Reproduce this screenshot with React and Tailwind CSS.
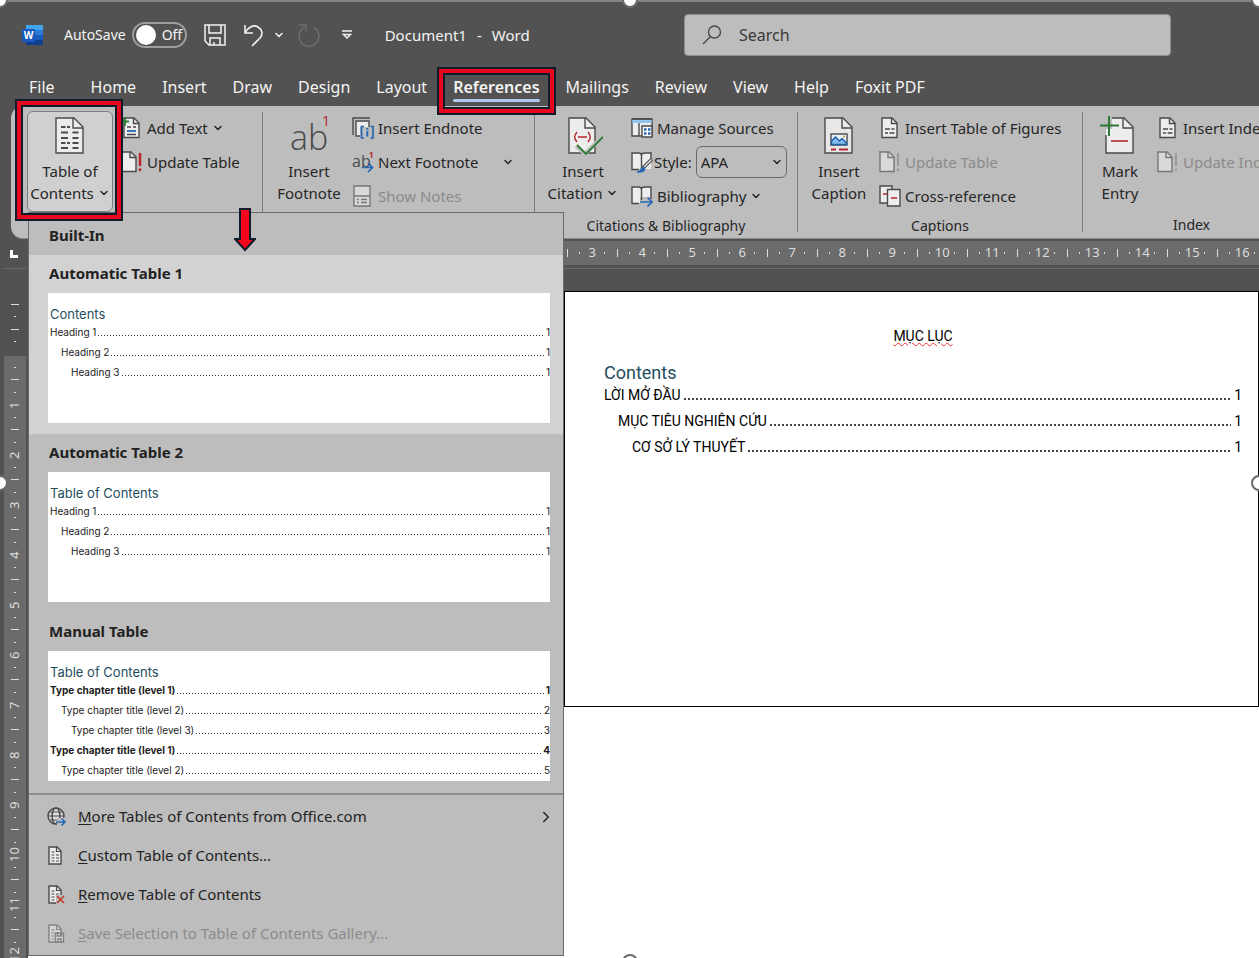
import { ChevronDown, ChevronRight } from 'lucide-react';
import clsx from 'clsx';

const TABS = ['File', 'Home', 'Insert', 'Draw', 'Design', 'Layout', 'References', 'Mailings', 'Review', 'View', 'Help', 'Foxit PDF'];

const GALLERY = [
  {
    name: 'Automatic Table 1',
    title: 'Contents',
    active: true,
    rows: [['Heading 1', 1, 1], ['Heading 2', 2, 1], ['Heading 3', 3, 1]],
  },
  {
    name: 'Automatic Table 2',
    title: 'Table of Contents',
    rows: [['Heading 1', 1, 1], ['Heading 2', 2, 1], ['Heading 3', 3, 1]],
  },
  {
    name: 'Manual Table',
    title: 'Table of Contents',
    manual: true,
    rows: [
      ['Type chapter title (level 1)', 1, 1],
      ['Type chapter title (level 2)', 2, 2],
      ['Type chapter title (level 3)', 3, 3],
      ['Type chapter title (level 1)', 1, 4],
      ['Type chapter title (level 2)', 2, 5],
    ],
  },
];

const DOC_ROWS = [
  ['LỜI MỞ ĐẦU', 'pl-0'],
  ['MỤC TIÊU NGHIÊN CỨU', 'pl-3.5'],
  ['CƠ SỞ LÝ THUYẾT', 'pl-7'],
];

/* ---------- icons ---------- */

function Svg({ w = 22, h = 22, children, className }) {
  return (
    <svg width={w} height={h} viewBox={`0 0 ${w} ${h}`} fill="none" stroke="#4a4a4a" strokeWidth="1.4" aria-hidden="true"
      className={clsx('shrink-0', className)}>
      {children}
    </svg>
  );
}

// page outline with a folded corner
const SmallPage = ({ x = 3 }) => (
  <>
    <path d={`M${x} 1h10l5 5v14.500h-15z`} fill="#ededed" />
    <path d={`M${x + 9.500} 1v5.500h5.500`} />
  </>
);

const BigPage = () => (
  <>
    <path d="M6 2h18l9 9v26H6z" fill="#e8e8e8" />
    <path d="M23 2v10h10" />
  </>
);

const Caret = ({ className }) => <ChevronDown size={12} strokeWidth={3} className={className} />;

const WordLogo = () => (
  <Svg className="ml-[22px]">
    <g stroke="none">
      <rect x="4" y="1" width="17" height="5" fill="#41a5ee" />
      <rect x="4" y="6" width="17" height="5" fill="#2b7cd3" />
      <rect x="4" y="11" width="17" height="5" fill="#185abd" />
      <rect x="4" y="16" width="17" height="5" fill="#103f91" />
      <rect x="0" y="5" width="13" height="13" rx="1" fill="#185abd" />
      <text x="6.500" y="15" textAnchor="middle" fontSize="10" fontWeight="700" fontFamily="Open Sans, sans-serif" fill="#fff">W</text>
    </g>
  </Svg>
);

const SaveIcon = () => (
  <Svg w={24} h={24}>
    <g stroke="#f2f2f2" strokeWidth="1.5">
      <path d="M2 2h20v20H6l-4-4z" />
      <path d="M6 2v8h12V2M7 22v-7h10v7M11 22v-3" />
    </g>
  </Svg>
);

const UndoIcon = () => (
  <Svg w={22} h={24}>
    <path d="M2 2v8h8M2 10c4-7 9-8.500 13-6s5.500 7 2 11l-8 8" stroke="#f2f2f2" strokeWidth="1.6" />
  </Svg>
);

const RedoIcon = () => (
  <Svg w={24} h={24}>
    <path d="M2 2h7v7M17 4.500A10 10 0 1 1 8 4" stroke="#6c6c6c" strokeWidth="1.5" />
  </Svg>
);

const CustomizeIcon = () => (
  <Svg w={12} h={12}>
    <path d="M1 2h10M2.500 5.500L6 9l3.500-3.500z" stroke="#f2f2f2" strokeWidth="1.5" />
  </Svg>
);

const SearchIcon = () => (
  <Svg>
    <circle cx="13.500" cy="8" r="6" />
    <path d="M9.500 12.500L2 20" />
  </Svg>
);

const TocIcon = () => (
  <Svg w={40} h={40}>
    <path d="M6 2h18l9 9v26H6z" fill="#ececec" />
    <path d="M23 2v10h10" />
    <path d="M11 11h4.500M17 11h3M11 16.500h7M22.500 16.500h6M11 22h7M22.500 22h6M11 27h4.500M17 27h3M22.500 27h6M11 32h7M22.500 32h6" strokeWidth="1.8" />
  </Svg>
);

const FootnoteIcon = () => (
  <Svg w={40} h={40}>
    <g stroke="none" fontFamily="Open Sans, sans-serif">
      <text x="1" y="34" fontSize="34" fontWeight="300" fill="#4a4a4a">ab</text>
      <text x="33" y="10" fontSize="14" fill="#b3262e">1</text>
    </g>
  </Svg>
);

const CitationIcon = () => (
  <Svg w={40} h={40}>
    <path d="M6 2h17l9 9v26H6z" fill="#ededed" />
    <path d="M22 2v10h10" />
    <g stroke="#b3262e">
      <path d="M14 16q-4.500 5 0 10M25 16q4.500 5 0 10M15 21h9" />
    </g>
    <path d="M13 30l9 8 18-18" stroke="#bdbdbd" strokeWidth="4" />
    <path d="M14 29l9 9 17-17" stroke="#2d7a37" strokeWidth="1.8" />
  </Svg>
);

const CaptionIcon = () => (
  <Svg w={40} h={40}>
    <BigPage />
    <rect x="12" y="18" width="16" height="11" fill="#e9f3fb" />
    <path d="M12.500 25l4-4 4 4 2.500-2.500 4.500 4.500v1.500h-15z" fill="#83beec" stroke="#1e5fa8" />
    <path d="M12 33.500h5M20 33.500h9" stroke="#b3262e" strokeWidth="1.8" />
    <circle cx="25" cy="20.500" r="1" fill="#d08a2c" stroke="none" />
  </Svg>
);

const MarkIcon = () => (
  <Svg w={40} h={40}>
    <path d="M6 17v20h27V11l-9-9H12v11H6z" fill="#ededed" stroke="none" />
    <path d="M12 2h12l9 9v26H6V19M23 2v10h10" />
    <path d="M9 0v20M0 9.500h19" stroke="#2d7a37" strokeWidth="2" />
    <path d="M11 25h17" stroke="#b3262e" strokeWidth="1.6" />
  </Svg>
);

const AddTextIcon = () => (
  <Svg>
    <SmallPage />
    <path d="M6 10h4M12 10h3M6 17.500h9" />
    <path d="M6 14h9" stroke="#2467b3" strokeWidth="1.8" />
    <path d="M4 0v9M0 4.500h8" stroke="#2d7a37" strokeWidth="1.800" />
  </Svg>
);

const UpdateIcon = ({ off }) => (
  <Svg className={clsx(off && 'opacity-60')}>
    <path d="M0 1h10l5 5v14.500H1V1" fill="#ededed" />
    <path d="M9 1v5.500h6" />
    <path d="M19 2v13M19 17.500v2.500" stroke={off ? '#777' : '#c0242d'} strokeWidth={off ? 1.600 : 2.500} />
  </Svg>
);

const EndnoteIcon = () => (
  <Svg>
    <path d="M1 18V1h17" />
    <path d="M4 4h13v15H4z" fill="#ededed" />
    <path d="M8 10h14v12H8z" fill="#bdbdbd" stroke="none" />
    <path d="M12 9.500H9.500V21H12M18.500 9.500H21V21h-2.500" stroke="#2467b3" strokeWidth="1.700" />
    <path d="M15.300 11v1.800M15.300 14v5.500" stroke="#2467b3" strokeWidth="2" />
  </Svg>
);

const NextFootnoteIcon = () => (
  <Svg>
    <g stroke="none" fontFamily="Open Sans, sans-serif">
      <text x="0" y="16" fontSize="16" fill="#4a4a4a">ab</text>
      <text x="17" y="7" fontSize="8" fontWeight="700" fill="#b3262e">1</text>
    </g>
    <path d="M10 16.500h10M16 12l4.500 4.500L16 21" stroke="#2467b3" strokeWidth="1.700" />
  </Svg>
);

const ShowNotesIcon = () => (
  <Svg className="opacity-60">
    <path d="M2 1h16v20H2z" fill="#ededed" />
    <path d="M2 11h16M5 14.500h2M9 14.500h6M5 17.500h2M9 17.500h6" />
  </Svg>
);

const SourcesIcon = () => (
  <Svg>
    <path d="M1 2h20v17H1z" fill="#ededed" />
    <path d="M1 4.500h20" stroke="#83beec" strokeWidth="2.500" />
    <path d="M1 2h20M8 6v13" />
    <path d="M11 9h10v11H11z" fill="#fff" />
    <path d="M13 12.500h2.500M17 12.500h2.500M13 16.500h2.500M17 16.500h2.500" stroke="#2467b3" strokeWidth="2.500" />
  </Svg>
);

const BookIcon = ({ brush }) => (
  <Svg>
    <path d="M1 2h7l2.500 2L13 2h7v16h-7l-2.500 2L8 18H1z" fill="#ededed" stroke="none" />
    <path d="M8 18.500H1V2h6.500q3 0 3 2.500 0-2.500 3-2.500H20v6M10.500 4v14" />
    {brush ? (
      <>
        <path d="M21 8l-9 9" stroke="#4a4a4a" strokeWidth="3.500" />
        <path d="M20.500 8.500L13 16" stroke="#ededed" strokeWidth="1.200" />
        <path d="M6 21q3 0 4-3.500 3-2.500 4 .500-1 4-8 3z" fill="#2467b3" stroke="#2467b3" strokeWidth="1" />
      </>
    ) : (
      <>
        <path d="M9 12h13v9H9z" fill="#bdbdbd" stroke="none" />
        <path d="M20 8v6M10.500 12v3" />
        <path d="M9 17h12M16.500 12.500L21 17l-4.500 4.500" stroke="#2467b3" strokeWidth="1.700" />
      </>
    )}
  </Svg>
);

const FiguresIcon = () => (
  <Svg>
    <SmallPage />
    <path d="M6 12h5M12.500 12h3M6 16h3M10.500 16h5" strokeWidth="1.600" />
  </Svg>
);

const CrossRefIcon = () => (
  <Svg>
    <path d="M1 1h12v17H1z" fill="#ededed" />
    <path d="M8.500 4.500h12.500V21H8.500z" fill="#ededed" />
    <path d="M4 9h4M12 13h6" stroke="#b3262e" strokeWidth="1.600" />
  </Svg>
);

const GlobeIcon = () => (
  <Svg w={20} h={20}>
    <circle cx="9" cy="9" r="8" fill="#dcdcdc" />
    <ellipse cx="9" cy="9" rx="4" ry="8" />
    <path d="M1 9h16M2 5h14M2 13h14" strokeWidth="1.100" />
    <path d="M10 11h9v8h-9z" fill="#bdbdbd" stroke="none" />
    <path d="M9 15h9M14.500 11.500L18 15l-3.500 3.500" stroke="#2467b3" strokeWidth="1.600" />
  </Svg>
);

const ListPageIcon = ({ mark }) => (
  <Svg w={20} h={20} className={clsx(mark === 'save' && 'opacity-50')}>
    <path d="M2 1h8l4 4v13H2z" fill="#ececec" />
    <path d="M9.500 1v4.500H14M4.500 6h3M4.500 9h3M9 9h3M4.500 12h3M9 12h3M4.500 15h3M9 15h3" strokeWidth="1.200" />
    {mark === 'remove' && (
      <>
        <path d="M9 10h8v9H9z" fill="#bdbdbd" stroke="none" />
        <path d="M10 11l7 7M17 11l-7 7" stroke="#c0392b" strokeWidth="1.600" />
      </>
    )}
    {mark === 'save' && <path d="M8.500 9h8v9h-8zM10.500 9v3h4V9M11 18v-3h3v3" fill="#ececec" />}
  </Svg>
);

/* ---------- ribbon pieces ---------- */

function BigButton({ icon, lines, menu, className }) {
  return (
    <button className={clsx('flex h-[101px] shrink-0 flex-col items-center pt-[5px]', className)}>
      {icon}
      <span className="mt-1 flex flex-col items-center leading-[22px]">
        <span>{lines[0]}</span>
        <span className="flex items-center gap-1 whitespace-nowrap">
          {lines[1]}
          {menu && <Caret />}
        </span>
      </span>
    </button>
  );
}

function RowButton({ icon, label, menu, disabled, wide }) {
  return (
    <button disabled={disabled} className="flex h-[34px] items-center gap-1 whitespace-nowrap disabled:text-[#8b8b8b]">
      {icon}
      <span>{label}</span>
      {menu && <Caret className={clsx(wide && 'ml-5')} />}
    </button>
  );
}

function Group({ label, className, children }) {
  return (
    <section className={clsx('flex shrink-0 flex-col', className)}>
      <div className="flex h-[107px] items-start pt-[5px]">{children}</div>
      {label && <h2 className="text-center text-sm leading-[26px]">{label}</h2>}
    </section>
  );
}

const Divider = () => <div className="my-1.5 w-px shrink-0 bg-[#7c7c7c]" />;

// navy / red / navy frame used as a callout
const Callout = ({ className }) => (
  <div className={clsx('pointer-events-none absolute z-30 border-2 border-[#101c2c]', className)}>
    <div className="h-full border-4 border-[#e8051d]">
      <div className="h-full border-2 border-[#101c2c]" />
    </div>
  </div>
);

function TocMenu() {
  return (
    <div className="absolute left-px top-full z-20 w-[536px] border border-[#6a6a6a] bg-[#bdbdbd] text-[#222]">
      <h3 className="h-[42px] pl-5 pt-3 text-[15px] leading-5 font-bold">Built-In</h3>
      {GALLERY.map(item => (
        <button key={item.name}
          className={clsx('block w-full pb-[11px] pl-[19px] pr-[13px] text-left', item.active && 'bg-[#d2d2d2]')}>
          <span className="mb-0.5 block pl-px text-[15px] leading-9 font-bold">{item.name}</span>
          <span className="block h-[130px] bg-white pl-0.5 pt-[13px] font-[Inter,sans-serif] text-[10px] text-[#1c1c1c]">
            <span className="block text-[13px] leading-4 text-[#1f4e5f]">{item.title}</span>
            {item.rows.map(([text, level, page], i) => (
              <span key={i}
                className={clsx('flex h-5 items-center gap-0.5 leading-5', level === 2 && 'pl-[11px]', level === 3 && 'pl-[21px]')}>
                <span className={clsx('shrink-0', item.manual && level === 1 && 'font-bold')}>{text}</span>
                <span className="mt-[7px] h-px flex-1 bg-[linear-gradient(90deg,#333_1px,transparent_1px)] bg-[length:3px_1px]" />
                <span className={clsx(item.manual && level === 1 && 'font-bold')}>{page}</span>
              </span>
            ))}
          </span>
        </button>
      ))}
      <div className="mt-px border-t-2 border-[#8f8f8f] py-0.5">
        <MenuItem icon={<GlobeIcon />} hotkey="M" rest="ore Tables of Contents from Office.com" more />
        <MenuItem icon={<ListPageIcon />} hotkey="C" rest="ustom Table of Contents..." />
        <MenuItem icon={<ListPageIcon mark="remove" />} hotkey="R" rest="emove Table of Contents" />
        <MenuItem icon={<ListPageIcon mark="save" />} hotkey="S" rest="ave Selection to Table of Contents Gallery..." disabled />
      </div>
    </div>
  );
}

function MenuItem({ icon, hotkey, rest, more, disabled }) {
  return (
    <button disabled={disabled} className="flex h-[39px] w-full items-center pl-[18px] pr-2 text-[15px] disabled:text-[#8b8b8b]">
      {icon}
      <span className="ml-[11px]"><u className="underline-offset-2">{hotkey}</u>{rest}</span>
      {more && <ChevronRight size={18} strokeWidth={2} className="ml-auto" />}
    </button>
  );
}

/* ---------- rulers ---------- */

function HorizontalRuler() {
  return (
    <div className="flex h-6 overflow-hidden bg-[#6b6b6b] text-[13px] text-[#dedede]">
      {Array.from({ length: 14 }, (_, i) => i + 3).map(n => (
        <div key={n} className="grid w-[50px] shrink-0 grid-cols-4 items-center justify-items-center">
          <i className="h-2 w-px bg-[#dedede]" />
          <i className="h-0.5 w-px bg-[#dedede]" />
          <span className="flex w-0 justify-center">{n}</span>
          <i className="h-0.5 w-px bg-[#dedede]" />
        </div>
      ))}
    </div>
  );
}

const VDot = () => <i className="h-px w-0.5 bg-[#dedede]" />;
const VDash = () => <i className="h-px w-2 bg-[#dedede]" />;

function VerticalRuler() {
  return (
    <div className="w-7 shrink-0 overflow-hidden bg-[#525252] pl-1 pr-0.5 text-[13px] text-[#dedede]">
      <div className="h-[88px] border-t border-[#6b6b6b] pt-[29px]">
        <div className="grid h-[50px] grid-rows-4 items-center justify-items-center">
          <VDash /><VDot /><VDash /><VDot />
        </div>
      </div>
      <div className="h-[602px] overflow-hidden bg-[#6b6b6b] pt-[5px]">
        {Array.from({ length: 12 }, (_, i) => i + 1).map(n => (
          <div key={n} className="grid h-[50px] grid-rows-4 items-center justify-items-center">
            <VDot /><VDash /><VDot />
            <span className="flex h-0 rotate-180 items-center justify-center [writing-mode:vertical-rl]">{n}</span>
          </div>
        ))}
      </div>
    </div>
  );
}

const Handle = ({ className }) => (
  <span className={clsx('absolute z-40 size-4 rounded-full border-2 border-[#6a6a6a] bg-white', className)} />
);

export default function App() {
  return (
    <div className="relative flex min-h-screen flex-col overflow-hidden bg-white font-['Noto_Sans',sans-serif] text-[15px] text-[#262626]">
      <Handle className="-left-2 -top-2" />
      <Handle className="-top-2 left-1/2 -translate-x-1/2" />
      <Handle className="-right-2 -top-2" />
      <Handle className="-left-2 top-1/2 -mt-1" />
      <Handle className="-right-2 top-1/2 -mt-1" />
      <Handle className="-bottom-3 left-1/2 -translate-x-1/2" />

      {/* Title bar */}
      <header className="flex h-[68px] items-center border-t-2 border-[#858585] bg-[#525252] text-[#f4f4f4]">
        <WordLogo />
        <label htmlFor="autosave" className="ml-5 whitespace-nowrap text-sm">AutoSave</label>
        <button id="autosave" role="switch" aria-checked="false"
          className="ml-1.5 flex h-[26px] w-[55px] shrink-0 items-center gap-1.5 rounded-full border-2 border-[#9d9d9d] pl-0.5 text-sm">
          <span className="size-5 rounded-full bg-white" />
          Off
        </button>
        <button aria-label="Save" className="ml-4"><SaveIcon /></button>
        <button aria-label="Undo" className="ml-4"><UndoIcon /></button>
        <button aria-label="Undo history" className="ml-2"><Caret /></button>
        <button aria-label="Redo" className="ml-3" disabled><RedoIcon /></button>
        <button aria-label="Customize toolbar" className="ml-5"><CustomizeIcon /></button>
        <h1 className="ml-8 flex gap-2.5 whitespace-nowrap"><span>Document1</span><span>-</span><span>Word</span></h1>
        <label className="ml-auto mr-[88px] flex h-[42px] w-[487px] items-center gap-4 rounded border border-[#8e8e8e] bg-[#bdbdbd] pl-4 text-base text-[#3a3a3a]">
          <SearchIcon />
          <input type="search" placeholder="Search" className="min-w-0 flex-1 bg-transparent outline-none placeholder:text-[#3a3a3a]" />
        </label>
      </header>

      {/* Tabs */}
      <nav className="flex h-[38px] items-center gap-[26px] whitespace-nowrap bg-[#525252] pl-[29px] text-base text-[#f4f4f4]">
        {TABS.map(tab => (
          <a key={tab} href="#" className={clsx('relative leading-6', tab === 'File' && 'mr-2.5', tab === 'References' && 'font-semibold')}>
            {tab}
            {tab === 'References' && (
              <>
                <span className="absolute inset-x-0 -bottom-[3px] h-[3px] rounded-full bg-[#b4c7ee]" />
                <Callout className="-inset-x-4 -top-2 -bottom-4" />
              </>
            )}
          </a>
        ))}
      </nav>

      {/* Ribbon */}
      <div className="bg-[#525252] pl-[11px]">
        <div className="relative flex h-[133px] rounded-l-xl border-b border-[#8a8a8a] bg-[#bdbdbd]">
          <Group className="w-[251px]">
            <div className="relative ml-4">
              <BigButton icon={<TocIcon />} lines={['Table of', 'Contents']} menu
                className="w-[86px] rounded-md bg-[#d0d0d0] outline-1 -outline-offset-1 outline-[#7d7d7d]" />
              <Callout className="-left-3 -right-2.5 -top-3 -bottom-[9px]" />
              <TocMenu />
            </div>
            <div className="ml-2">
              <RowButton icon={<AddTextIcon />} label="Add Text" menu />
              <RowButton icon={<UpdateIcon />} label="Update Table" />
            </div>
          </Group>
          <Divider />
          <Group className="w-[271px]">
            <BigButton icon={<FootnoteIcon />} lines={['Insert', 'Footnote']} className="ml-1 w-[84px]" />
            <div className="ml-px">
              <RowButton icon={<EndnoteIcon />} label="Insert Endnote" />
              <RowButton icon={<NextFootnoteIcon />} label="Next Footnote" menu wide />
              <RowButton icon={<ShowNotesIcon />} label="Show Notes" disabled />
            </div>
          </Group>
          <Divider />
          <Group label="Citations & Bibliography" className="w-[262px]">
            <BigButton icon={<CitationIcon />} lines={['Insert', 'Citation']} menu className="ml-0.5 w-[92px]" />
            <div className="ml-0.5">
              <RowButton icon={<SourcesIcon />} label="Manage Sources" />
              <div className="flex h-[34px] items-center">
                <BookIcon brush />
                <label htmlFor="style" className="ml-px">Style:</label>
                <span className="relative ml-1">
                  <select id="style" className="h-8 w-[91px] appearance-none rounded-md border border-[#6a6a6a] pl-1">
                    <option>APA</option>
                  </select>
                  <Caret className="pointer-events-none absolute right-1 top-2.5" />
                </span>
              </div>
              <RowButton icon={<BookIcon />} label="Bibliography" menu />
            </div>
          </Group>
          <Divider />
          <Group label="Captions" className="w-[284px]">
            <BigButton icon={<CaptionIcon />} lines={['Insert', 'Caption']} className="ml-px w-20" />
            <div>
              <RowButton icon={<FiguresIcon />} label="Insert Table of Figures" />
              <RowButton icon={<UpdateIcon off />} label="Update Table" disabled />
              <RowButton icon={<CrossRefIcon />} label="Cross-reference" />
            </div>
          </Group>
          <Divider />
          <Group label="Index" className="w-[217px]">
            <BigButton icon={<MarkIcon />} lines={['Mark', 'Entry']} className="ml-0.5 w-[70px]" />
            <div className="ml-0.5">
              <RowButton icon={<FiguresIcon />} label="Insert Index" />
              <RowButton icon={<UpdateIcon off />} label="Update Index" disabled />
            </div>
          </Group>

          <svg width="22" height="44" viewBox="0 0 22 44" className="absolute left-[223px] top-[102px] z-30" aria-hidden="true">
            <path d="M6 1h10v30h5L11 42 1 31h5z" fill="#f5061d" stroke="#101c2c" strokeWidth="2" />
          </svg>
        </div>
      </div>

      {/* Ruler bar */}
      <div className="flex h-[29px] bg-[#525252]">
        <div className="flex w-7 shrink-0 items-center justify-center">
          <i className="size-2 border-b-[3px] border-l-[3px] border-white" />
        </div>
        <div className="min-w-0 flex-1 pl-[533px] pt-0.5">
          <HorizontalRuler />
        </div>
      </div>

      {/* Document area */}
      <div className="flex flex-1">
        <VerticalRuler />
        <div className="w-[536px] shrink-0" />
        <main className="min-w-0 flex-1 font-[Roboto,sans-serif] text-sm text-black">
          <div className="h-[23px] border-t border-[#6b6b6b] bg-[#525252]" />
          <article className="h-[416px] border border-black bg-white pl-[39px] pr-4 pt-8">
            <p className="text-center leading-6">
              <span className="underline decoration-red-500 decoration-wavy decoration-1">MỤC LỤC</span>
            </p>
            <h2 className="mt-4 text-lg leading-[18px] text-[#1f4e5f]">Contents</h2>
            {DOC_ROWS.map(([text, indent]) => (
              <p key={text} className={clsx('flex h-[26px] items-center gap-[3px]', indent)}>
                <span className="shrink-0">{text}</span>
                <span className="mt-2 h-0.5 flex-1 bg-[linear-gradient(90deg,#444_2px,transparent_2px)] bg-[length:4px_2px]" />
                <span>1</span>
              </p>
            ))}
          </article>
        </main>
      </div>
    </div>
  );
}
